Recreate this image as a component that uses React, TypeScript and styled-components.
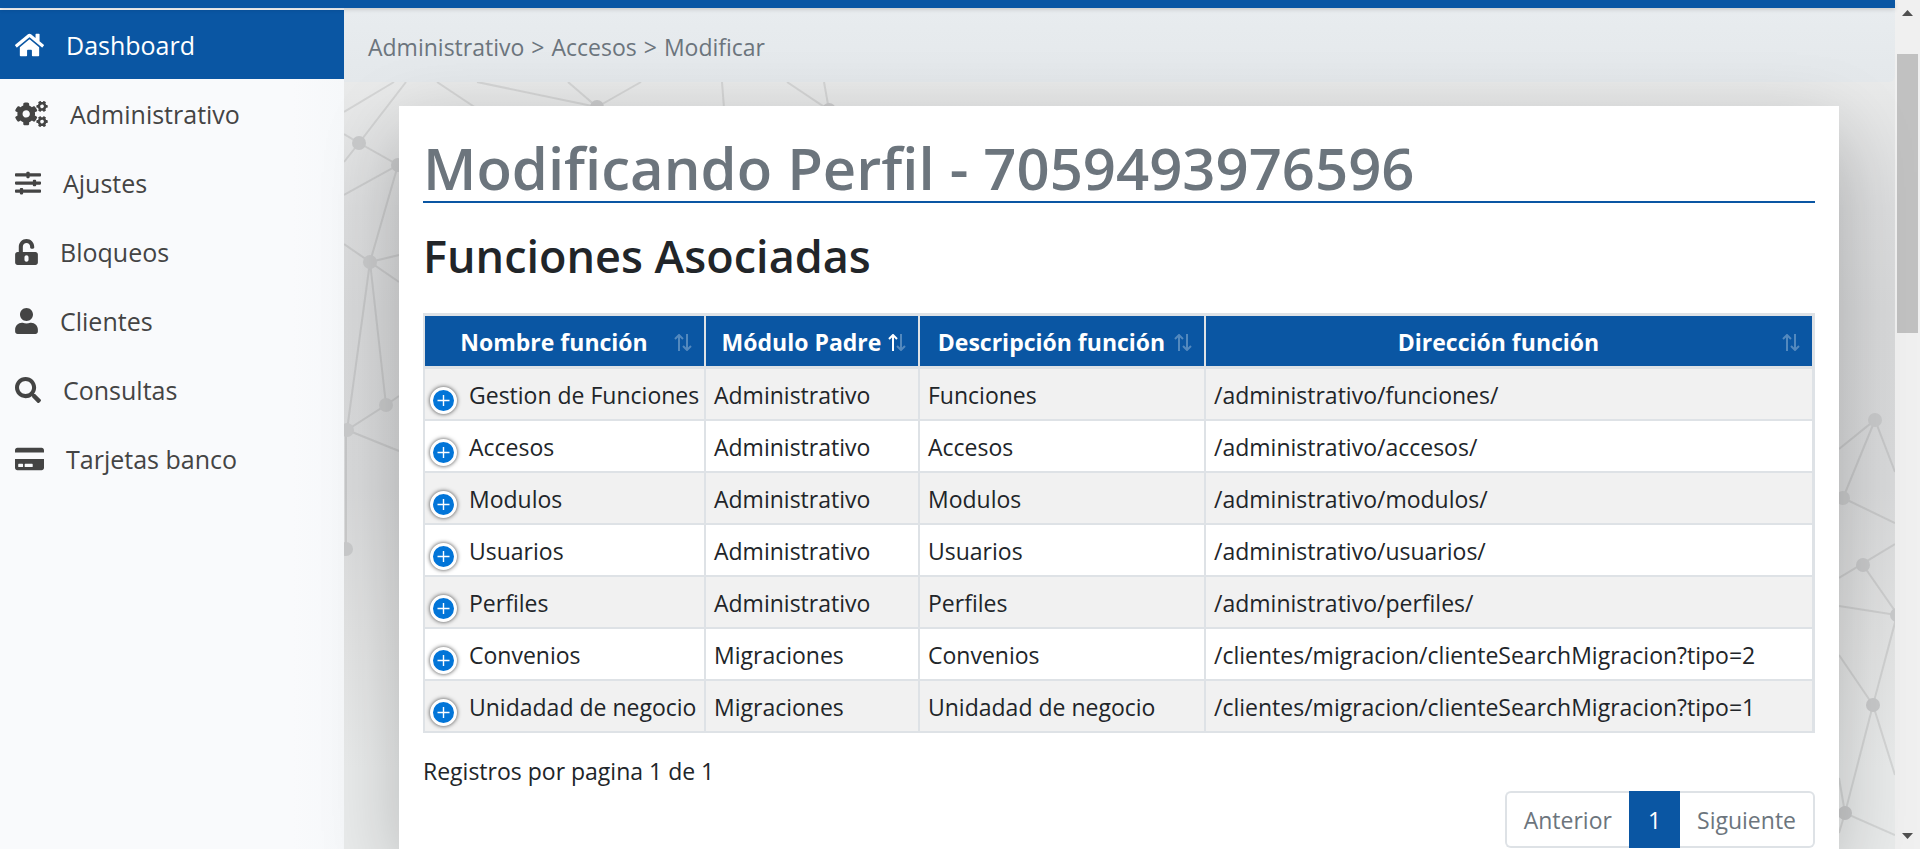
import React from "react";
import styled, { createGlobalStyle } from "styled-components";
import {
  FaHome,
  FaCogs,
  FaSlidersH,
  FaUnlockAlt,
  FaUser,
  FaSearch,
  FaCreditCard,
} from "react-icons/fa";

const blue = "#0a56a3";
const line = "#dee2e6";
const muted = "#6c757d";

const GlobalStyle = createGlobalStyle`
  *, *::before, *::after { box-sizing: border-box; }
  body {
    margin: 0;
    font-family: "Segoe UI", "Open Sans", "Noto Sans", sans-serif;
    font-size: 23px;
    line-height: 36px;
    color: #212529;
    background: #e9eaea;
  }
`;

const Shell = styled.div`
  display: flex;
  height: 100vh;
  overflow: hidden;
`;

const Page = styled.div`
  flex: 1;
  min-width: 0;
  display: flex;
  flex-direction: column;
`;

const TopBar = styled.header`
  position: relative;
  z-index: 1;
  flex: none;
  height: 8px;
  background: ${blue};
  box-shadow: 0 2px 4px rgba(0, 0, 0, 0.12);
`;

const Columns = styled.div`
  flex: 1;
  min-height: 0;
  display: flex;
`;

const Sidebar = styled.nav`
  flex: none;
  width: 344px;
  padding-top: 2px;
  background: linear-gradient(to right, #f9fafc 85%, #f6f8fa);
`;

const MenuLink = styled.a<{ $active?: boolean; $iconWidth: number }>`
  display: flex;
  align-items: center;
  gap: 22px;
  height: 69px;
  padding-left: 15px;
  font-size: 25px;
  text-decoration: none;
  color: ${(p) => (p.$active ? "#fff" : "#444")};
  background: ${(p) => (p.$active ? blue : "transparent")};

  svg {
    flex: none;
    width: ${(p) => p.$iconWidth}px;
    height: 26px;
  }
`;

const Main = styled.main`
  position: relative;
  z-index: 0;
  flex: 1;
  min-width: 0;
  display: flex;
  flex-direction: column;
  background: linear-gradient(
    to bottom,
    #e9eaea 74px,
    #dcddde 200px,
    #d8d9da 300px,
    #d9dadb 480px,
    #e3e4e4 640px,
    #e9ebeb 760px
  );
`;

const Mesh = styled.svg<{ $side: "left" | "right" }>`
  position: absolute;
  z-index: -1;
  top: -8px;
  ${(p) => p.$side}: 0;
  stroke: rgba(110, 110, 110, 0.17);
  stroke-width: 2;
  fill: none;

  circle {
    stroke: none;
    fill: #c9cacb;
  }
`;

const Breadcrumb = styled.div`
  flex: none;
  display: flex;
  align-items: center;
  gap: 7px;
  height: 72px;
  margin-top: 2px;
  padding: 2px 24px 0;
  border-radius: 0 0 6px 0;
  color: ${muted};
  background: linear-gradient(to bottom, #e8ecef, #e4e8eb);

  a {
    color: inherit;
    text-decoration: none;
  }
`;

const Card = styled.section`
  flex: 1;
  margin: 24px 56px 0 55px;
  padding: 24px 24px 0;
  background: #fff;
  box-shadow: 0 24px 72px rgba(0, 0, 0, 0.22);
`;

const Title = styled.h1`
  margin: 0 0 24px;
  padding-top: 4px;
  border-bottom: 2px solid ${blue};
  font-size: 58px;
  font-weight: 600;
  line-height: 67px;
  color: ${muted};
`;

const Subtitle = styled.h2`
  margin: 0 0 28px;
  font-size: 45px;
  font-weight: 600;
  line-height: 58px;
`;

const Table = styled.table`
  width: 100%;
  table-layout: fixed;
  border-collapse: separate;
  border-spacing: 0;
  border: solid ${line};
  border-width: 3px 3px 0 2px;
  white-space: nowrap;
`;

const Col = styled.col<{ $w?: number }>`
  width: ${(p) => (p.$w ? `${p.$w}px` : "auto")};
`;

const HeadCell = styled.th`
  position: relative;
  height: 53px;
  padding: 2px 30px 0 9px;
  border-right: 2px solid ${line};
  border-bottom: 3px solid ${line};
  font-weight: 700;
  text-align: center;
  color: #fff;
  background: ${blue};

  &:last-child {
    border-right: 0;
  }
`;

const SortMark = styled.svg<{ $asc?: boolean }>`
  position: absolute;
  right: 12px;
  top: 18px;
  fill: none;
  stroke: #fff;
  stroke-width: 2;

  path {
    opacity: 0.3;
  }
  path:first-child {
    opacity: ${(p) => (p.$asc ? 1 : 0.3)};
  }
`;

const Row = styled.tr`
  background: #fff;

  &:nth-child(odd) {
    background: #f1f1f1;
  }
`;

const Cell = styled.td`
  height: 52px;
  padding: 2px 8px 0;
  border-right: 2px solid ${line};
  border-bottom: 2px solid ${line};

  &:first-child {
    padding: 2px 0 0 5px;
  }
  &:last-child {
    border-right: 0;
  }
`;

const Expandable = styled.div`
  display: flex;
  align-items: center;
  gap: 12px;
`;

const ExpandButton = styled.button`
  flex: none;
  display: grid;
  place-items: center;
  width: 27px;
  height: 27px;
  margin-top: 10px;
  padding: 0;
  border: 3px solid #fff;
  border-radius: 50%;
  background: #0275d8;
  box-shadow: 0 0 4px #444;
`;

const Info = styled.p`
  margin: 20px 0 2px;
`;

const Pagination = styled.nav`
  display: flex;
  justify-content: flex-end;
`;

const PageButton = styled.button<{ $active?: boolean }>`
  height: 57px;
  padding: 0 17px;
  border: 2px solid ${(p) => (p.$active ? blue : line)};
  font: inherit;
  color: ${(p) => (p.$active ? "#fff" : muted)};
  background: ${(p) => (p.$active ? blue : "#fff")};

  &:first-child {
    border-right: 0;
    border-radius: 6px 0 0 6px;
  }
  &:last-child {
    border-left: 0;
    border-radius: 0 6px 6px 0;
  }
`;

const ScrollTrack = styled.div`
  flex: none;
  display: flex;
  flex-direction: column;
  align-items: center;
  width: 25px;
  padding: 10px 0;
  background: #f0f0f0;

  svg {
    fill: #505050;
  }
`;

const ScrollThumb = styled.div`
  width: 21px;
  height: 279px;
  margin: 38px 0 auto;
  background: #c1c1c1;
`;

const menu = [
  { label: "Dashboard", icon: FaHome, iconWidth: 29, active: true },
  { label: "Administrativo", icon: FaCogs, iconWidth: 33 },
  { label: "Ajustes", icon: FaSlidersH, iconWidth: 26 },
  { label: "Bloqueos", icon: FaUnlockAlt, iconWidth: 23 },
  { label: "Clientes", icon: FaUser, iconWidth: 23 },
  { label: "Consultas", icon: FaSearch, iconWidth: 26 },
  { label: "Tarjetas banco", icon: FaCreditCard, iconWidth: 29 },
];

const columns = [
  { label: "Nombre función", width: 281 },
  { label: "Módulo Padre", width: 214, asc: true },
  { label: "Descripción función", width: 286 },
  { label: "Dirección función" },
];

const rows = [
  ["Gestion de Funciones", "Administrativo", "Funciones", "/administrativo/funciones/"],
  ["Accesos", "Administrativo", "Accesos", "/administrativo/accesos/"],
  ["Modulos", "Administrativo", "Modulos", "/administrativo/modulos/"],
  ["Usuarios", "Administrativo", "Usuarios", "/administrativo/usuarios/"],
  ["Perfiles", "Administrativo", "Perfiles", "/administrativo/perfiles/"],
  ["Convenios", "Migraciones", "Convenios", "/clientes/migracion/clienteSearchMigracion?tipo=2"],
  ["Unidadad de negocio", "Migraciones", "Unidadad de negocio", "/clientes/migracion/clienteSearchMigracion?tipo=1"],
];

const leftNodes = [[359, 143], [398, 165], [370, 262], [386, 405], [347, 430], [346, 549], [597, 107], [829, 110]];
const rightNodes = [[1875, 420], [1843, 498], [1863, 565], [1897, 615], [1873, 705], [1845, 813]];

const Nodes = ({ points }: { points: number[][] }) => (
  <>
    {points.map(([x, y]) => (
      <circle key={`${x}-${y}`} cx={x} cy={y} r="7" />
    ))}
  </>
);

export default function App() {
  return (
    <>
      <GlobalStyle />
      <Shell>
        <Page>
          <TopBar />
          <Columns>
            <Sidebar>
              {menu.map(({ label, icon: Icon, iconWidth, active }) => (
                <MenuLink key={label} href="#" $active={active} $iconWidth={iconWidth}>
                  <Icon />
                  {label}
                </MenuLink>
              ))}
            </Sidebar>
            <Main>
              <Mesh $side="left" width="500" height="849" viewBox="344 0 500 849" aria-hidden="true">
                <path d="M344 112L394 82M406 82L359 143L344 134M344 162L359 143L398 165L344 195M398 165L370 262L344 244M399 255L370 262L399 282M370 262L347 430L386 405L370 262M386 405L399 396M399 451L347 430M346 430V549M437 82L476 108M477 82L597 107L568 82M641 82L597 107M722 82L724 108M787 82L829 110L824 82" />
                <Nodes points={leftNodes} />
              </Mesh>
              <Mesh $side="right" width="56" height="849" viewBox="1839 0 56 849" aria-hidden="true">
                <path d="M1839 449L1875 420L1895 472M1875 420L1843 498L1895 523M1839 578L1895 544M1863 565L1895 611M1839 606L1897 615L1873 705L1839 655M1895 775L1873 705L1845 813L1839 778M1895 835L1845 813L1839 833" />
                <Nodes points={rightNodes} />
              </Mesh>
              <Breadcrumb>
                <a href="#">Administrativo</a>
                <span>&gt;</span>
                <a href="#">Accesos</a>
                <span>&gt;</span>
                <span>Modificar</span>
              </Breadcrumb>
              <Card>
                <Title>Modificando Perfil - 7059493976596</Title>
                <Subtitle>Funciones Asociadas</Subtitle>
                <Table>
                  <colgroup>
                    {columns.map((c) => (
                      <Col key={c.label} $w={c.width} />
                    ))}
                  </colgroup>
                  <thead>
                    <tr>
                      {columns.map((c) => (
                        <HeadCell key={c.label} scope="col">
                          {c.label}
                          <SortMark $asc={c.asc} width="18" height="17" viewBox="0 0 18 17" aria-hidden="true">
                            <path d="M5 17V1M1 5L5 1L9 5" />
                            <path d="M13 0V16M9 12L13 16L17 12" />
                          </SortMark>
                        </HeadCell>
                      ))}
                    </tr>
                  </thead>
                  <tbody>
                    {rows.map(([name, parent, description, path]) => (
                      <Row key={name}>
                        <Cell>
                          <Expandable>
                            <ExpandButton type="button" aria-label={`Expandir ${name}`}>
                              <svg width="13" height="13" viewBox="0 0 13 13" stroke="#fff" strokeWidth="1.4">
                                <path d="M6.5 1V12M0.5 6.5H12.5" />
                              </svg>
                            </ExpandButton>
                            {name}
                          </Expandable>
                        </Cell>
                        <Cell>{parent}</Cell>
                        <Cell>{description}</Cell>
                        <Cell>{path}</Cell>
                      </Row>
                    ))}
                  </tbody>
                </Table>
                <Info>Registros por pagina 1 de 1</Info>
                <Pagination aria-label="Paginación">
                  <PageButton type="button">Anterior</PageButton>
                  <PageButton type="button" $active>1</PageButton>
                  <PageButton type="button">Siguiente</PageButton>
                </Pagination>
              </Card>
            </Main>
          </Columns>
        </Page>
        <ScrollTrack aria-hidden="true">
          <svg width="11" height="6" viewBox="0 0 11 6">
            <path d="M0 6L5.500 0L11 6Z" />
          </svg>
          <ScrollThumb />
          <svg width="11" height="6" viewBox="0 0 11 6">
            <path d="M0 0L5.500 6L11 0Z" />
          </svg>
        </ScrollTrack>
      </Shell>
    </>
  );
}
